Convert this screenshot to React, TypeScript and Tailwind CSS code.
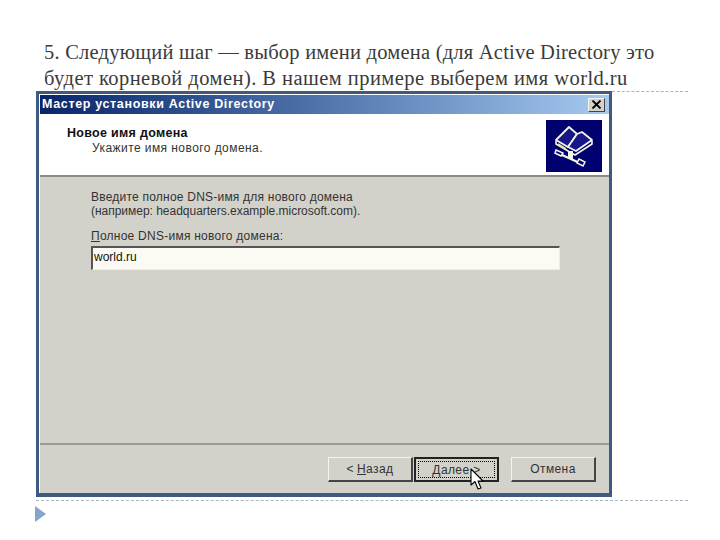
function BookIcon() {
  return (
    <div className="w-[56px] h-[52px] bg-[#00006e] shrink-0">
      <svg width="56" height="52" viewBox="0 0 56 52" fill="none">
        <path d="M10 20 L23 7 L31 14 L22 27 Z" fill="#17178a" stroke="#f4f4e8" strokeWidth="1.8" strokeLinejoin="round" />
        <path d="M31 14 L36 12 L46 20 L30 31 L22 27 Z" fill="#17178a" stroke="#f4f4e8" strokeWidth="1.8" strokeLinejoin="round" />
        <path d="M10 21 L10 24 L29 35 L46 24 L46 21" stroke="#f4f4e8" strokeWidth="1.6" strokeLinejoin="round" />
        <path d="M12 24 L20 29" stroke="#e6e69a" strokeWidth="2" />
        <path d="M10 30 L17 33 L15 36 L9 33 Z" fill="#00006e" stroke="#f4f4e8" strokeWidth="1.5" />
        <path d="M16 35 L36 44" stroke="#f4f4e8" strokeWidth="2.4" />
        <path d="M22 31 h5 v8 h-5 Z" fill="#f4f4e8" />
        <path d="M33 39 L39 42 L37 46 L31 43 Z" fill="#00006e" stroke="#f4f4e8" strokeWidth="1.5" />
      </svg>
    </div>
  );
}

function Cursor() {
  return (
    <svg className="absolute left-[54px] top-[9px]" width="14" height="24" viewBox="0 0 14 24">
      <path d="M1 1 L1 17 L5 13.5 L8 21 L11 20 L8 13 L13 13 Z" fill="#fff" stroke="#000" strokeWidth="1.1" strokeLinejoin="round" />
    </svg>
  );
}

function WizardButton({ children, focused }: { children: React.ReactNode; focused?: boolean }) {
  if (focused) {
    return (
      <div className="relative w-[85px] h-[25px] border-2 border-[#222] bg-[#d2d2ca] p-[2px]">
        <div className="h-full border border-dotted border-black flex items-center justify-center text-[12px] text-[#333] tracking-[0.4px]">
          {children}
        </div>
        <Cursor />
      </div>
    );
  }
  return (
    <div className="w-[85px] h-[25px] border border-[#f4f3ee] border-r-[#444] border-b-[#444] border-b-2 border-r-2 bg-[#d2d2ca] flex items-center justify-center text-[12px] text-[#333] tracking-[0.4px]">
      {children}
    </div>
  );
}

export default function App() {
  return (
    <div className="w-[720px] h-[540px] bg-white overflow-hidden font-['Liberation_Sans',sans-serif]">
      <div className="pl-[44px] pt-[39px] h-[91px] font-['Liberation_Serif',serif] text-[20.5px] leading-[26px] text-[#3a3a3a] whitespace-nowrap">
        <p className="tracking-[0.22px]">5. Следующий шаг — выбор имени домена (для Active Directory это</p>
        <p className="tracking-[0.45px]">будет корневой домен). В нашем примере выберем имя world.ru</p>
      </div>

      <div className="flex pl-[36px]">
        <div className="w-[576px] h-[406px] bg-white border-[3px] border-[#3f5a80] border-b-[4px] flex flex-col">
          <div className="ml-[1px] mt-[1px] h-[19px] bg-gradient-to-r from-[#0a246a] to-[#a6caf0] flex items-center justify-between pl-[2px] pr-[4px] shrink-0">
            <span className="text-[12.5px] font-bold text-white tracking-[0.65px]">Мастер установки Active Directory</span>
            <div className="w-[17px] h-[14px] bg-[#d2d2ca] border border-[#f4f3ee] border-r-[#444] border-b-[#444] flex items-center justify-center">
              <svg width="11" height="9" viewBox="0 0 11 9">
                <path d="M1.5 0.5 L9.5 8.5 M9.5 0.5 L1.5 8.5" stroke="#000" strokeWidth="1.8" />
              </svg>
            </div>
          </div>

          <div className="ml-[1px] h-[63px] bg-white border-b-2 border-[#8a8a84] flex justify-between pl-[27px] pr-[7px] pt-[6px] shrink-0">
            <div className="text-[#111]">
              <div className="text-[12.5px] leading-[14px] pt-[6px] font-bold tracking-[0.3px]">Новое имя домена</div>
              <div className="text-[12px] leading-[14px] pt-[1px] pl-[25px] tracking-[0.43px] text-[#333]">Укажите имя нового домена.</div>
            </div>
            <BookIcon />
          </div>

          <div className="ml-[1px] flex-1 bg-[#d2d2ca] flex flex-col text-[#333]">
            <div className="pl-[51px] pt-[13px] h-[268px] shrink-0 border-b-2 border-[#9c9a94]">
              <div className="text-[12px] leading-[14px] tracking-[0.22px]">Введите полное DNS-имя для нового домена</div>
              <div className="text-[12px] leading-[14px] tracking-[-0.02px]">(например: headquarters.example.microsoft.com).</div>
              <div className="text-[12px] leading-[14px] mt-[11px] tracking-[0.25px]">
                <span className="underline">П</span>олное DNS-имя нового домена:
              </div>
              <div className="mt-[3px] w-[469px] h-[24px] bg-[#fbfbf4] border-t-2 border-l-2 border-[#555] border-b border-r border-b-[#eeeee8] border-r-[#eeeee8] flex items-center pl-[1px] pb-[3px] text-[12px] text-[#111]">
                world.ru
              </div>
            </div>
            <div className="flex justify-end items-start pt-[12px] pr-[13px]">
              <WizardButton>
                &lt; <span className="underline ml-[3px]">Н</span>азад
              </WizardButton>
              <div className="w-[1px]" />
              <WizardButton focused>
                <span className="underline">Д</span>алее &gt;
              </WizardButton>
              <div className="w-[12px]" />
              <WizardButton>Отмена</WizardButton>
            </div>
          </div>
        </div>
        <div className="w-[76px] h-0 border-t border-dashed border-[#a9b4c2]" />
      </div>

      <div className="ml-[36px] mt-[3px] w-[652px] border-t border-dashed border-[#a9b4c2]" />
      <div className="ml-[35px] mt-[5px] w-0 h-0 border-y-[8px] border-y-transparent border-l-[11px] border-l-[#84a6cc]" />
    </div>
  );
}
